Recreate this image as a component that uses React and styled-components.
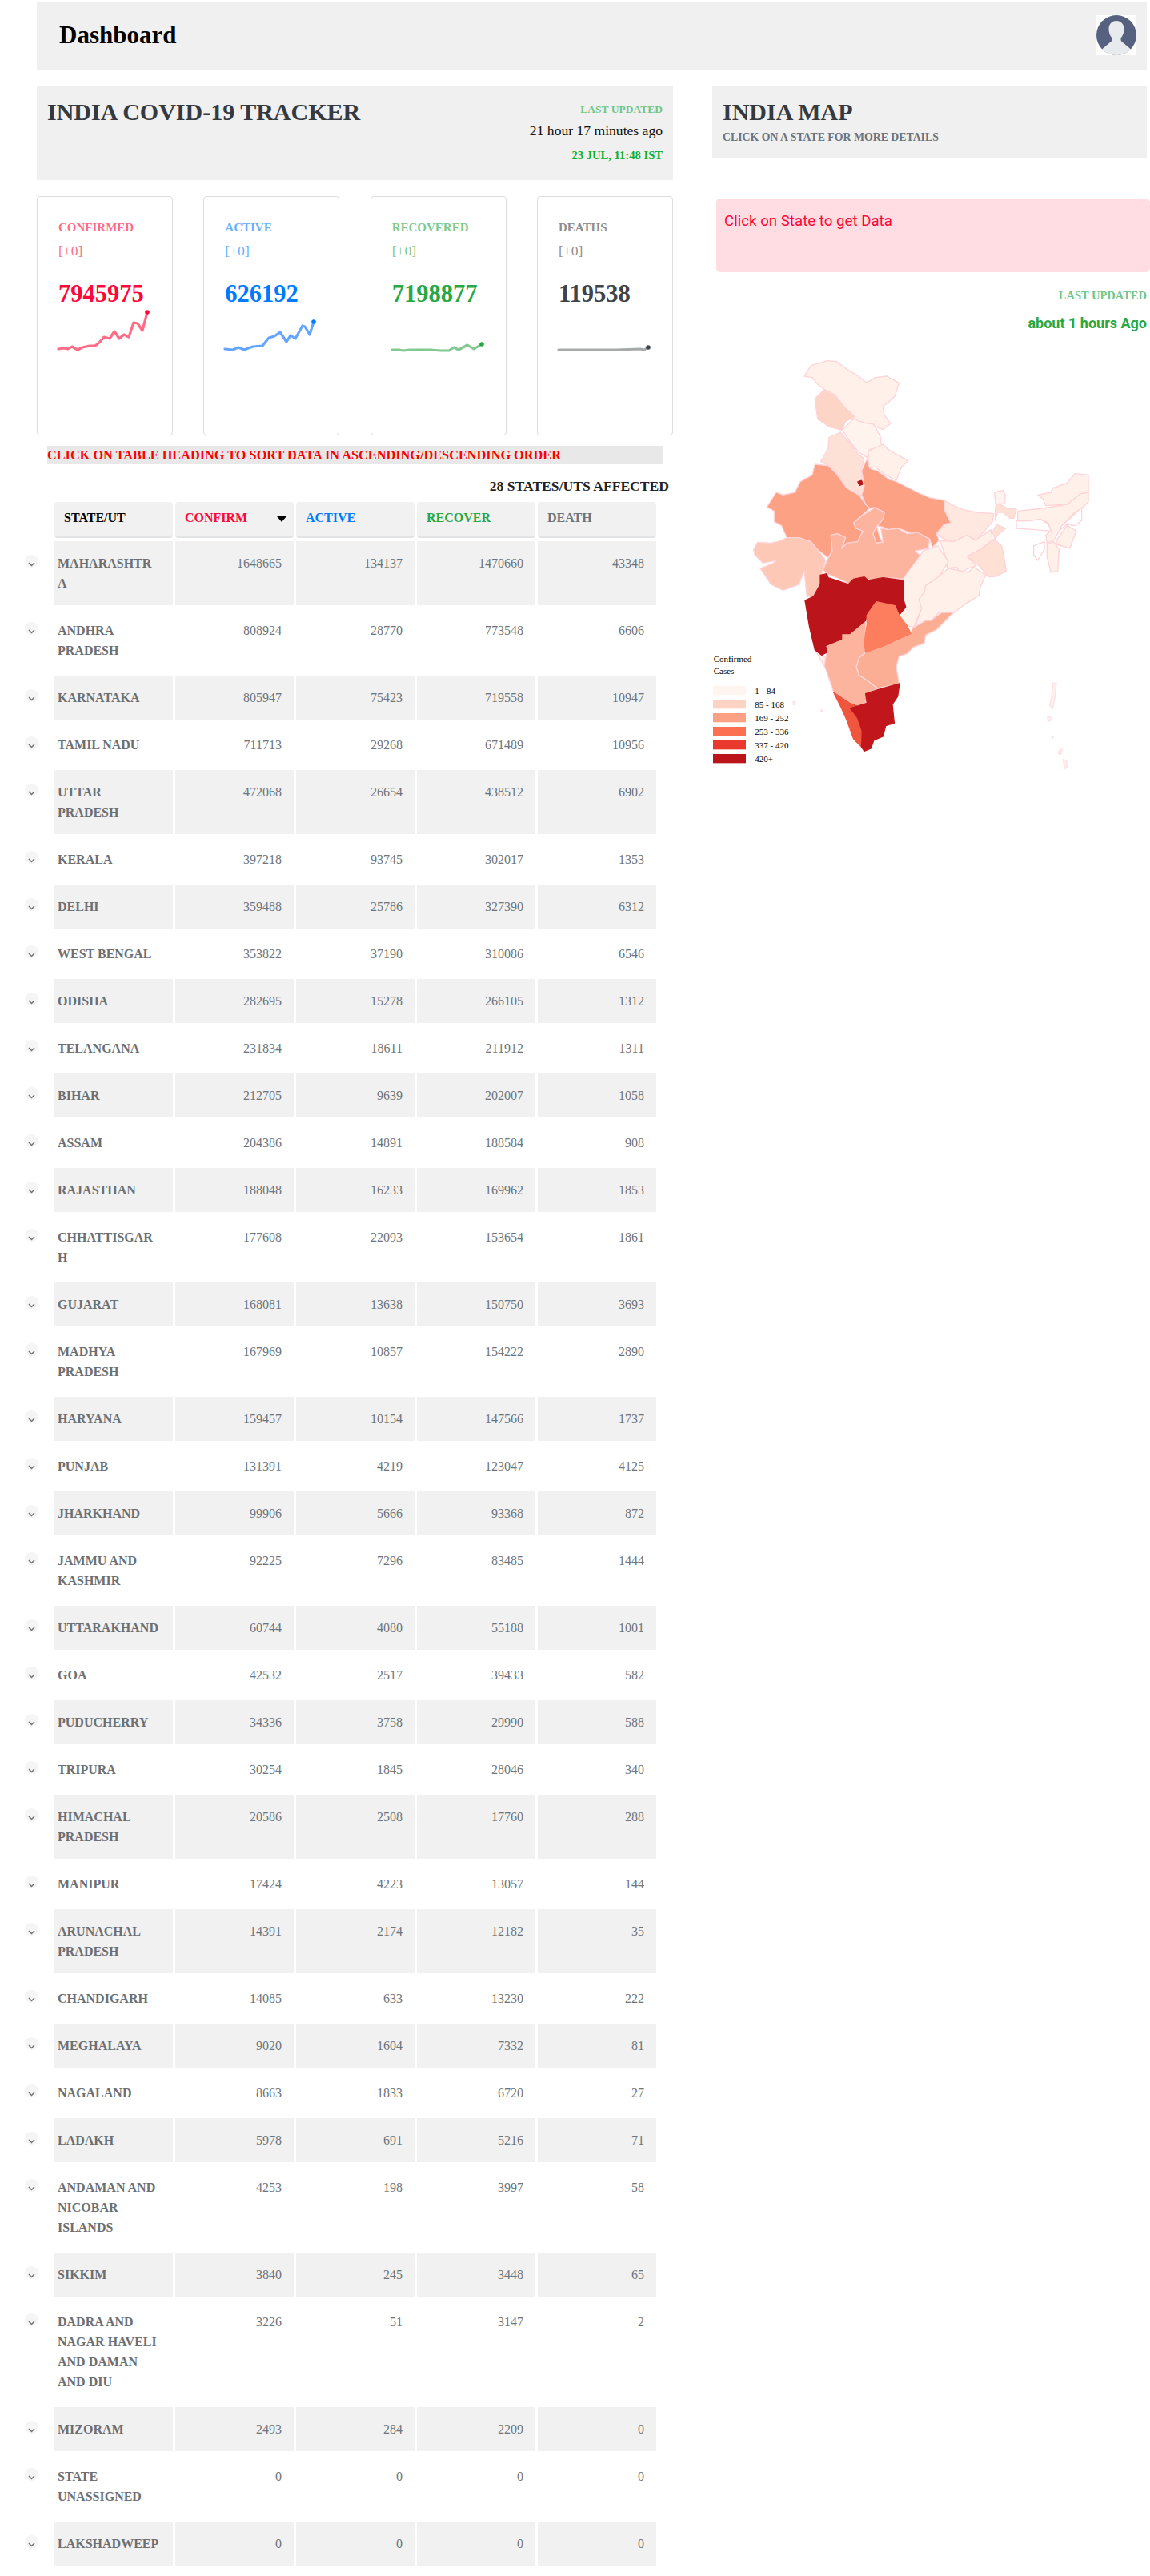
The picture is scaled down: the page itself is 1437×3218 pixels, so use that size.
import React from 'react'
import styled, { createGlobalStyle } from 'styled-components'

const GlobalStyle = createGlobalStyle`
  html, body {
    margin: 0;
    padding: 0;
    background: #fff;
    font-family: "Liberation Serif", "Times New Roman", serif;
    font-size: 16px;
  }
`

const Page = styled.div`
  width: 1437px;
  padding: 2px 0 14px;
`
const TopBar = styled.header`
  display: flex;
  align-items: flex-start;
  justify-content: space-between;
  height: 86px;
  margin: 0 4px 0 46px;
  padding: 17px 13px 0 28px;
  box-sizing: border-box;
  background: #f0f0f0;
`
const Brand = styled.h2`
  margin: 7px 0 0;
  font-size: 31px;
  line-height: 36px;
  font-weight: bold;
  color: #000;
`
const Avatar = styled.svg`
  display: block;
  width: 50px;
  height: 50px;
  background: #fff;
`
const Columns = styled.main`
  display: flex;
  margin-top: 20px;
`
const LeftColumn = styled.section`
  width: 890px;
  flex: none;
`
const RightColumn = styled.aside`
  flex: 1;
  min-width: 0;
`
const HeadPanel = styled.div`
  display: flex;
  justify-content: space-between;
  height: 117px;
  width: 795px;
  margin-left: 46px;
  padding: 14px 13px 0;
  box-sizing: border-box;
  background: #f0f0f0;
`
const MainTitle = styled.h1`
  margin: 0;
  font-size: 30px;
  line-height: 36px;
  color: #343a40;
`
const Updated = styled.div`
  display: flex;
  flex-direction: column;
  align-items: flex-end;
`
const UpdatedLabel = styled.span`
  font-size: ${(p) => p.$size || 13.5}px;
  line-height: 20px;
  font-weight: bold;
  color: #74c687;
  margin-top: 5px;
`
const UpdatedAgo = styled.span`
  font-size: 17.6px;
  line-height: 20px;
  margin-top: 6px;
  color: #111;
`
const UpdatedDate = styled.span`
  font-size: 14.6px;
  line-height: 20px;
  font-weight: bold;
  color: #0aaf3b;
  margin-top: 11px;
`
const Cards = styled.div`
  display: grid;
  grid-template-columns: repeat(4, 170px);
  justify-content: space-between;
  width: 795px;
  margin: 20px 0 0 46px;
`
const Card = styled.article`
  height: 299px;
  box-sizing: border-box;
  padding: 28px 0 0 26px;
  border: 1px solid #ddd;
  border-radius: 4px;
  background: #fff;
`
const CardLabel = styled.div`
  font-size: 15px;
  line-height: 20px;
  font-weight: bold;
  color: ${(p) => p.$color};
  opacity: 0.6;
`
const CardDelta = styled.div`
  font-size: 17.6px;
  line-height: 20px;
  margin-top: 9px;
  color: ${(p) => p.$color};
  opacity: 0.6;
`
const CardValue = styled.div`
  font-size: 30.5px;
  line-height: 36px;
  font-weight: bold;
  margin-top: 26px;
  color: ${(p) => p.$color};
`
const Spark = styled.svg`
  display: block;
  width: 122px;
  height: 58px;
  margin: 1px 0 0 -3px;
`
const SortHint = styled.div`
  width: 770px;
  height: 23px;
  margin: 13px 0 0 59px;
  background: #e8e8e8;
  color: #ff0000;
  font-size: 16.3px;
  line-height: 23px;
  font-weight: bold;
  white-space: nowrap;
`
const Affected = styled.div`
  width: 836px;
  margin-top: 17px;
  text-align: right;
  font-size: 17.6px;
  line-height: 20px;
  font-weight: bold;
  color: #222;
`
const Table = styled.table`
  table-layout: fixed;
  width: 798px;
  margin: 6px 0 0 22px;
  border-collapse: separate;
  border-spacing: 3px 4px;
`
const ToggleHead = styled.th`
  width: 40px;
  padding: 0;
`
const Head = styled.th`
  position: relative;
  width: 148px;
  height: 45px;
  box-sizing: border-box;
  padding: 0 0 2px 12px;
  text-align: left;
  font-size: 16px;
  font-weight: bold;
  color: ${(p) => p.$color};
  background: #f1f1f1;
  border-radius: 4px;
  border-bottom: 3px solid #e1e3e5;
`
const Caret = styled.span`
  position: absolute;
  right: 9px;
  top: 18px;
  width: 0;
  height: 0;
  border-left: 6px solid transparent;
  border-right: 6px solid transparent;
  border-top: 7px solid #000;
`
const ToggleCell = styled.td`
  padding: 17px 0 0 6px;
  vertical-align: top;
`
const Toggle = styled.span`
  display: block;
  position: relative;
  width: 17px;
  height: 16px;
  border-radius: 50%;
  background: #f5f5f5;
`
const Chevron = styled.svg`
  position: absolute;
  left: 4px;
  top: 9px;
  width: 9px;
  height: 6px;
`
const NameCell = styled.td`
  padding: 15px 16px 15px 4px;
  vertical-align: top;
  word-break: break-word;
  font-size: 16px;
  line-height: 25px;
  font-weight: bold;
  color: #6c6f73;
  background: ${(p) => (p.$shaded ? '#f1f1f1' : 'transparent')};
`
const NumberCell = styled.td`
  padding: 15px 15px 15px 0;
  vertical-align: top;
  text-align: right;
  font-size: 16px;
  line-height: 25px;
  color: #6c757d;
  background: ${(p) => (p.$shaded ? '#f1f1f1' : 'transparent')};
`
const MapPanel = styled.div`
  height: 90px;
  margin-right: 4px;
  padding: 14px 13px 0;
  box-sizing: border-box;
  background: #f0f0f0;
`
const MapHint = styled.div`
  font-size: 13.8px;
  line-height: 20px;
  font-weight: bold;
  color: #6c757d;
  margin-top: 4px;
`
const Alert = styled.div`
  height: 92px;
  margin: 50px 0 0 5px;
  padding: 16px 10px;
  box-sizing: border-box;
  border-radius: 5px;
  background: #ffdde3;
  color: #ff073a;
  font-family: Roboto, sans-serif;
  font-size: 18.7px;
  line-height: 24px;
`
const MapUpdated = styled.div`
  display: flex;
  flex-direction: column;
  align-items: flex-end;
  margin: 14px 4px 0 0;
`
const MapAgo = styled.span`
  margin-top: 14px;
  font-family: Roboto, sans-serif;
  font-size: 18px;
  line-height: 22px;
  font-weight: 700;
  color: #28a745;
`
const MapSvg = styled.svg`
  display: block;
  width: 543px;
  height: 550px;
  margin-top: 15px;
`

const stats = [
  {
    label: 'CONFIRMED', value: 7945975, color: '#ff073a', line: '#ff6c85',
    points: '3,46 10,45 15,46 20,43 27,47 33,44 42,42 49,42 55,37 60,31 67,33 73,24 79,33 85,28 91,31 97,13 102,14 108,23 114,0',
  },
  {
    label: 'ACTIVE', value: 626192, color: '#007bff', line: '#66a5ff',
    points: '3,46 13,47 20,44 27,47 38,43 50,42 58,32 65,30 72,25 80,37 85,29 91,33 100,17 103,18 109,28 114,12',
  },
  {
    label: 'RECOVERED', value: 7198877, color: '#28a745', line: '#80c990',
    points: '3,47 11,47 17,48 25,47 50,47 64,48 74,48 80,44 86,47 97,41 105,46 115,40',
  },
  {
    label: 'DEATHS', value: 119538, color: '#3f4448', labelColor: '#444', line: '#a6a9ac',
    points: '3,47 47,47 75,47 105,46 110,47 115,44',
  },
]

const rows = [
  ['MAHARASHTRA', 1648665, 134137, 1470660, 43348],
  ['ANDHRA PRADESH', 808924, 28770, 773548, 6606],
  ['KARNATAKA', 805947, 75423, 719558, 10947],
  ['TAMIL NADU', 711713, 29268, 671489, 10956],
  ['UTTAR PRADESH', 472068, 26654, 438512, 6902],
  ['KERALA', 397218, 93745, 302017, 1353],
  ['DELHI', 359488, 25786, 327390, 6312],
  ['WEST BENGAL', 353822, 37190, 310086, 6546],
  ['ODISHA', 282695, 15278, 266105, 1312],
  ['TELANGANA', 231834, 18611, 211912, 1311],
  ['BIHAR', 212705, 9639, 202007, 1058],
  ['ASSAM', 204386, 14891, 188584, 908],
  ['RAJASTHAN', 188048, 16233, 169962, 1853],
  ['CHHATTISGARH', 177608, 22093, 153654, 1861],
  ['GUJARAT', 168081, 13638, 150750, 3693],
  ['MADHYA PRADESH', 167969, 10857, 154222, 2890],
  ['HARYANA', 159457, 10154, 147566, 1737],
  ['PUNJAB', 131391, 4219, 123047, 4125],
  ['JHARKHAND', 99906, 5666, 93368, 872],
  ['JAMMU AND KASHMIR', 92225, 7296, 83485, 1444],
  ['UTTARAKHAND', 60744, 4080, 55188, 1001],
  ['GOA', 42532, 2517, 39433, 582],
  ['PUDUCHERRY', 34336, 3758, 29990, 588],
  ['TRIPURA', 30254, 1845, 28046, 340],
  ['HIMACHAL PRADESH', 20586, 2508, 17760, 288],
  ['MANIPUR', 17424, 4223, 13057, 144],
  ['ARUNACHAL PRADESH', 14391, 2174, 12182, 35],
  ['CHANDIGARH', 14085, 633, 13230, 222],
  ['MEGHALAYA', 9020, 1604, 7332, 81],
  ['NAGALAND', 8663, 1833, 6720, 27],
  ['LADAKH', 5978, 691, 5216, 71],
  ['ANDAMAN AND NICOBAR ISLANDS', 4253, 198, 3997, 58],
  ['SIKKIM', 3840, 245, 3448, 65],
  ['DADRA AND NAGAR HAVELI AND DAMAN AND DIU', 3226, 51, 3147, 2],
  ['MIZORAM', 2493, 284, 2209, 0],
  ['STATE UNASSIGNED', 0, 0, 0, 0],
  ['LAKSHADWEEP', 0, 0, 0, 0],
]

const columns = [
  { title: 'STATE/UT', color: '#000' },
  { title: 'CONFIRM', color: '#ff073a', sorted: true },
  { title: 'ACTIVE', color: '#007bff' },
  { title: 'RECOVER', color: '#28a745' },
  { title: 'DEATH', color: '#6c757d' },
]

// outlines were traced from different crops, so each group has its own offset
const northStates = [
  ['#fff0ea', '405,120 430,80 490,62 525,65 560,90 600,115 640,145 670,125 715,120 760,145 745,195 700,235 705,265 728,298 700,320 660,305 620,295 580,275 555,235 520,190 480,170 455,150 435,125'],
  ['#fdd5c6', '445,205 480,170 520,190 555,235 595,272 560,290 545,322 500,310 455,280'],
  ['#fff3ee', '548,322 590,280 630,295 665,300 690,345 695,385 650,395 640,425 610,405 580,370'],
  ['#fee1d6', '497,350 540,330 580,375 605,410 630,430 618,470 635,555 610,570 600,548 570,560 545,520 525,480 495,455 467,440 495,390'],
  ['#fff1ea', '645,400 700,375 720,395 755,415 795,437 770,460 750,510 710,490 670,460 645,465'],
]
const centralStates = [
  ['#fca183', '265,60 315,65 345,95 385,150 430,175 455,210 470,225 410,280 420,300 445,310 425,350 385,355 365,375 380,335 350,320 325,325 330,385 315,410 275,380 250,350 205,335 160,335 140,290 112,275 112,235 85,220 120,165 145,175 190,165 210,125 255,100'],
  ['#fca183', '460,40 470,75 500,85 540,115 570,125 620,150 660,170 695,185 750,195 750,230 775,280 750,285 720,320 730,345 705,372 695,340 670,335 630,320 580,300 540,305 520,295 495,290 510,340 520,350 495,355 480,320 490,300 520,265 525,240 490,222 470,225 455,210 440,175 450,140 440,85'],
  ['#fdb49e', '410,280 445,250 490,222 525,240 520,265 495,295 483,320 495,355 520,352 512,300 540,305 575,300 610,320 650,315 695,340 690,375 640,385 665,405 640,430 610,470 595,490 540,485 500,495 450,490 425,490 395,510 370,495 310,470 295,455 315,410 330,385 325,325 350,320 380,335 365,375 385,355 425,350 445,310 420,300'],
  ['#fdc9b6', '35,380 50,352 100,355 130,348 160,335 205,335 250,350 275,380 305,420 295,455 285,490 285,510 260,555 235,555 225,460 205,510 145,532 100,510 60,450 110,430 120,420 70,430 40,400'],
]
const eastStates = [
  ['#ffe8df', '150,320 180,285 205,280 180,230 180,195 215,215 250,230 300,240 365,245 360,275 330,310 300,345 265,325 215,350 180,340'],
  ['#fff1ea', '155,345 215,350 265,325 295,345 355,305 360,345 320,375 265,405 300,440 270,450 240,465 225,445 190,450 190,420 165,350'],
  ['#ffe0d4', '268,405 320,375 365,340 395,365 405,415 412,460 375,480 345,482 310,440'],
  ['#ffe0d4', '360,315 375,285 410,300 385,320 370,340'],
  ['#ffe0d4', '372,215 385,208 415,225 450,228 440,262 425,262 400,240 380,240 370,270'],
  ['#fff5f0', '368,165 400,158 408,175 405,208 372,208'],
  ['#fff1ea', '455,235 550,225 640,210 690,170 720,165 720,200 695,225 670,240 620,290 610,310 590,345 565,355 560,325 580,310 570,280 540,265 500,272 455,270'],
  ['#fff1ea', '530,175 580,165 585,150 640,130 670,95 720,100 720,165 690,170 640,210 560,215 550,190'],
  ['#fff', '620,290 695,222 695,270 670,290 640,285 615,305'],
  ['#fff', '450,272 500,272 540,265 570,285 580,310 520,305 450,300'],
  ['#fff', '515,365 555,350 555,380 530,420 515,400'],
  ['#fff1ea', '600,345 640,290 675,310 650,375 600,360'],
  ['#fff1ea', '565,360 590,350 610,380 605,460 580,465 565,410'],
]
// the darker states carry no pale outline, so they are drawn last with their own colour as stroke
const southStates = [
  ['#fff1ea', '850,25 905,5 945,65 910,120 860,155 855,180 835,205 845,240 815,310 790,305 760,265 785,238 770,205 778,125 800,95 830,55'],
  ['#fff1ea', '945,90 1020,105 1040,85 1085,115 1065,160 1060,190 1000,230 960,260 910,255 880,285 860,285 820,310 845,240 835,205 855,180 860,155 910,120'],
  ['#fcae94', '965,255 920,255 880,285 860,285 810,315 805,335 770,350 705,380 635,405 610,425 600,460 610,490 640,510 680,540 760,522 750,460 760,420 790,410 815,385 855,370 860,340 900,320'],
  ['#fdb49e', '485,380 545,355 545,335 575,335 635,285 635,405 610,425 600,460 610,490 640,510 680,540 640,560 635,595 605,607 575,595 515,555 490,480 480,455 485,425 490,405'],
  ['#fff1ea', '445,395 470,415 485,425 480,455'],
  ['#bb141a', '465,115 490,110 495,125 570,150 590,130 630,122 645,135 700,125 775,135 775,200 785,235 760,265 745,230 680,215 640,265 635,285 575,335 545,335 545,355 485,380 490,405 470,415 445,395 425,310 408,210 440,195 465,150', '#bb141a'],
  ['#fd7d5f', '675,215 745,230 760,265 790,305 805,335 770,350 705,380 635,405 630,370 640,300 640,265', '#fd7d5f'],
  ['#f0553e', '515,555 575,595 605,607 578,615 605,650 622,700 620,760 590,730 565,660 545,615', '#f0553e'],
  ['#c1161b', '680,545 762,522 755,570 735,600 742,670 710,680 700,720 665,735 655,765 630,775 620,760 622,700 605,650 578,615 640,595 635,560', '#c1161b'],
  ['#ffeef0', '1338,520 1350,520 1345,570 1336,615 1325,605 1332,570', '#ffe0e3'],
  ['#ffeef0', '1316,648 1328,646 1330,660 1320,664', '#ffe0e3'],
  ['#ffeef0', '1331,718 1340,720 1336,728', '#ffe0e3'],
  ['#ffeef0', '1360,772 1372,768 1366,788 1358,785', '#ffe0e3'],
  ['#ffeef0', '1375,805 1388,810 1390,835 1383,842 1378,825', '#ffe0e3'],
  ['#ffeef0', '363,590 372,590 372,600 365,601', '#ffe0e3'],
  ['#ffeef0', '467,620 476,624 470,629', '#ffe0e3'],
]
const legend = [
  ['#fff5f0', '1 - 84'],
  ['#fdd4c4', '85 - 168'],
  ['#fca183', '169 - 252'],
  ['#fc6f50', '253 - 336'],
  ['#ea3a2e', '337 - 420'],
  ['#bb141a', '420+'],
]

const States = ({ list, dx, dy }) => (
  <g transform={`translate(${dx},${dy})`} stroke="#ffd3d7" strokeWidth="4" strokeLinejoin="round">
    {list.map(([fill, points, stroke]) => (
      <polygon key={points} points={points} fill={fill} stroke={stroke} />
    ))}
  </g>
)

const IndiaMap = () => (
  <MapSvg viewBox="60 0 1629 1650">
    <States list={northStates} dx={0} dy={0} />
    <States list={centralStates} dx={180} dy={390} />
    <States list={eastStates} dx={750} dy={390} />
    <States list={southStates} dx={0} dy={750} />
    <polygon points="605,515 620,510 625,525 612,530" fill="#bb141a" stroke="#bb141a" strokeWidth="3" />
    <g transform="translate(0,750)" fontFamily="Liberation Serif, serif" fontSize="33" fill="#000">
      <text x="65" y="442">Confirmed</text>
      <text x="65" y="485">Cases</text>
      {legend.map(([fill, label], i) => (
        <g key={label}>
          <rect x="63" y={531 + i * 51} width="123" height="34" fill={fill} />
          <text x="220" y={562 + i * 51}>{label}</text>
        </g>
      ))}
    </g>
  </MapSvg>
)

const StatCard = ({ stat }) => {
  const last = stat.points.split(' ').pop().split(',')
  return (
    <Card>
      <CardLabel $color={stat.labelColor || stat.color}>{stat.label}</CardLabel>
      <CardDelta $color={stat.labelColor || stat.color}>[+0]</CardDelta>
      <CardValue $color={stat.color}>{stat.value}</CardValue>
      <Spark viewBox="0 -4 122 58">
        <polyline points={stat.points} fill="none" stroke={stat.line} strokeWidth="3.2" strokeLinejoin="round" strokeLinecap="round" />
        <circle cx={last[0]} cy={last[1]} r="2.8" fill={stat.color} />
      </Spark>
    </Card>
  )
}

const StateRow = ({ row, shaded }) => (
  <tr>
    <ToggleCell>
      <Toggle>
        <Chevron viewBox="0 0 9 6">
          <path d="M1 1l3.5 3.5L8 1" fill="none" stroke="#6c757d" strokeWidth="1.5" />
        </Chevron>
      </Toggle>
    </ToggleCell>
    <NameCell $shaded={shaded}>{row[0]}</NameCell>
    {row.slice(1).map((num, i) => (
      <NumberCell key={i} $shaded={shaded}>{num}</NumberCell>
    ))}
  </tr>
)

export default function App() {
  return (
    <Page>
      <GlobalStyle />
      <TopBar>
        <Brand>Dashboard</Brand>
        <Avatar viewBox="0 0 50 50">
          <circle cx="25" cy="25" r="25" fill="#56607f" />
          <path
            d="M25 7c-6 0-9.5 4.5-9.5 10 0 4 1 8 3.5 11 .8 1 .8 3-.2 4.5L7 42.5A25 25 0 0 0 25 50a25 25 0 0 0 18-7.5L31.2 32.5c-1-1.5-1-3.5-.2-4.5 2.5-3 3.5-7 3.5-11 0-5.5-3.5-10-9.5-10z"
            fill="#e7ebee"
          />
        </Avatar>
      </TopBar>
      <Columns>
        <LeftColumn>
          <HeadPanel>
            <MainTitle>INDIA COVID-19 TRACKER</MainTitle>
            <Updated>
              <UpdatedLabel>LAST UPDATED</UpdatedLabel>
              <UpdatedAgo>21 hour 17 minutes ago</UpdatedAgo>
              <UpdatedDate>23 JUL, 11:48 IST</UpdatedDate>
            </Updated>
          </HeadPanel>
          <Cards>
            {stats.map((stat) => (
              <StatCard key={stat.label} stat={stat} />
            ))}
          </Cards>
          <SortHint>CLICK ON TABLE HEADING TO SORT DATA IN ASCENDING/DESCENDING ORDER</SortHint>
          <Affected>28 STATES/UTS AFFECTED</Affected>
          <Table>
            <thead>
              <tr>
                <ToggleHead />
                {columns.map((col) => (
                  <Head key={col.title} $color={col.color}>
                    {col.title}
                    {col.sorted && <Caret />}
                  </Head>
                ))}
              </tr>
            </thead>
            <tbody>
              {rows.map((row, i) => (
                <StateRow key={row[0]} row={row} shaded={i % 2 === 0} />
              ))}
            </tbody>
          </Table>
        </LeftColumn>
        <RightColumn>
          <MapPanel>
            <MainTitle>INDIA MAP</MainTitle>
            <MapHint>CLICK ON A STATE FOR MORE DETAILS</MapHint>
          </MapPanel>
          <Alert>Click on State to get Data</Alert>
          <MapUpdated>
            <UpdatedLabel $size={14.5}>LAST UPDATED</UpdatedLabel>
            <MapAgo>about 1 hours Ago</MapAgo>
          </MapUpdated>
          <IndiaMap />
        </RightColumn>
      </Columns>
    </Page>
  )
}
